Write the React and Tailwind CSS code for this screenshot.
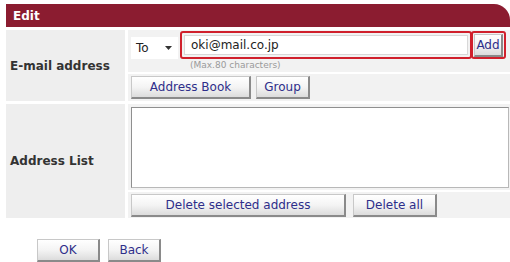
import React from "react";

const font = { fontFamily: '"DejaVu Sans", Verdana, sans-serif' };

function Btn({ children, className = "" }) {
  return (
    <div
      className={
        "flex items-center justify-center h-[23px] text-[12px] text-[#2e2e8a] bg-gradient-to-b from-white via-[#f4f4f4] to-[#dcdcdc] border border-[#c8c8c8] border-r-[#8a8a8a] border-b-[#8a8a8a] border-r-2 border-b-2 " +
        className
      }
    >
      {children}
    </div>
  );
}

export default function App() {
  return (
    <div className="w-[510px] h-[262px] bg-white overflow-hidden relative" style={font}>
      <div className="ml-[6px] mt-[4px] w-[504px]">
        <div className="h-[23px] bg-[#8b1c30] rounded-tr-[16px] pl-[7px] flex items-center text-white font-bold text-[12px]">
          Edit
        </div>
        {/* Row 1 */}
        <div className="flex mt-[3px] h-[71px] gap-[3px]">
          <div className="w-[119px] bg-[#eeeeee] flex items-center pl-[4px] text-[12px] font-bold text-[#333]">
            E-mail address
          </div>
          <div className="flex-1 flex flex-col gap-[2px]">
            <div className="h-[42px] bg-[#f2f2f2] relative">
              <div className="absolute left-[3px] top-[7px] w-[47px] h-[22px] bg-white flex items-center pl-[5px] text-[12px] text-[#222]">
                To
                <svg className="absolute right-[6px] top-[9px]" width="7" height="4" viewBox="0 0 7 4">
                  <path d="M0 0h7L3.5 4z" fill="#333" />
                </svg>
              </div>
              <div className="absolute left-[52px] top-[1px] w-[292px] h-[28px] border-2 border-[#d0202c] rounded-[3px] p-[2px]">
                <div className="w-full h-full bg-white border border-[#d8d8d8] flex items-center pl-[6px] text-[12px] text-[#222]">
                  oki@mail.co.jp
                </div>
              </div>
              <div className="absolute left-[62px] top-[30px] text-[9px] leading-[10px] text-[#9a9a9a]">
                (Max.80 characters)
              </div>
              <div className="absolute left-[343px] top-[1px] w-[35px] h-[28px] border-2 border-[#d0202c] rounded-[3px] p-[1px]">
                <Btn className="h-[22px] w-full">Add</Btn>
              </div>
            </div>
            <div className="flex-1 bg-[#f2f2f2] flex items-center pl-[3px] gap-[5px]">
              <Btn className="w-[120px]">Address Book</Btn>
              <Btn className="w-[54px]">Group</Btn>
            </div>
          </div>
        </div>
        {/* Row 2 */}
        <div className="flex mt-[3px] h-[114px] gap-[3px]">
          <div className="w-[119px] bg-[#eeeeee] flex items-center pl-[4px] text-[12px] font-bold text-[#333]">
            Address List
          </div>
          <div className="flex-1 flex flex-col gap-[2px]">
            <div className="h-[86px] bg-[#f2f2f2] pt-[3px] pl-[3px] pr-[1px]">
              <div className="h-[81px] bg-white border border-[#b8b8b8] border-t-[#8f8f8f] border-l-[#8f8f8f]" />
            </div>
            <div className="flex-1 bg-[#f2f2f2] flex items-center pl-[3px] gap-[7px]">
              <Btn className="w-[215px]">Delete selected address</Btn>
              <Btn className="w-[84px]">Delete all</Btn>
            </div>
          </div>
        </div>
        <div className="flex gap-[8px] mt-[21px] ml-[31px]">
          <Btn className="w-[63px]">OK</Btn>
          <Btn className="w-[53px]">Back</Btn>
        </div>
      </div>
    </div>
  );
}
